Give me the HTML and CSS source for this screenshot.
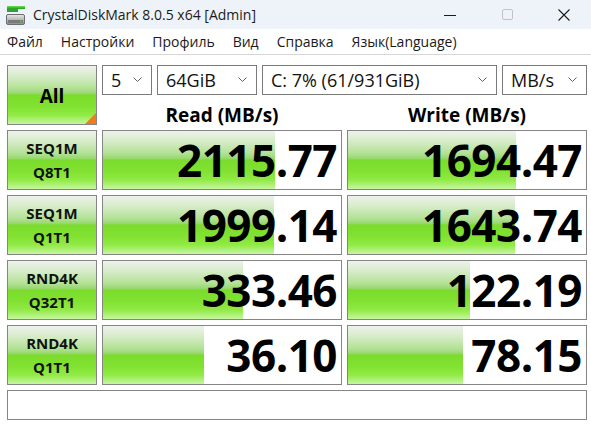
FILE: index.html
```html
<!DOCTYPE html>
<html lang="ru">
<head>
<meta charset="utf-8">
<title>CrystalDiskMark 8.0.5 x64 [Admin]</title>
<link rel="stylesheet" href="styles.css">
</head>
<body>
<div class="window">
  <div class="titlebar">
    <svg class="app-icon" width="20" height="20" viewBox="0 0 20 20">
      <defs>
        <linearGradient id="ig" x1="0" y1="0" x2="0" y2="1">
          <stop offset="0" stop-color="#6fe04a"/>
          <stop offset="1" stop-color="#1f9a2a"/>
        </linearGradient>
        <linearGradient id="dg" x1="0" y1="0" x2="0" y2="1">
          <stop offset="0" stop-color="#e8e8e8"/>
          <stop offset="1" stop-color="#8c8c8c"/>
        </linearGradient>
      </defs>
      <rect x="1" y="1" width="18" height="3" fill="url(#ig)"/>
      <rect x="1" y="4" width="11" height="3" fill="#2aa236"/>
      <rect x="0.5" y="9.5" width="18" height="10" rx="1.5" fill="url(#dg)" stroke="#6e6e6e"/>
      <rect x="2" y="15" width="15" height="3" fill="#7a7a7a"/>
      <rect x="14" y="15.5" width="2" height="2" fill="#40d040"/>
    </svg>
    <span class="title">CrystalDiskMark 8.0.5 x64 [Admin]</span>
    <div class="controls">
      <span class="ctrl ctrl-min"><svg width="12" height="12" viewBox="0 0 12 12"><line x1="0" y1="6.5" x2="12" y2="6.5" stroke="#1a1a1a" stroke-width="1"/></svg></span>
      <span class="ctrl ctrl-max"><svg width="12" height="12" viewBox="0 0 12 12"><rect x="0.5" y="0.5" width="10" height="10" rx="1.5" fill="none" stroke="#c2c2c2" stroke-width="1"/></svg></span>
      <span class="ctrl ctrl-close"><svg width="12" height="12" viewBox="0 0 12 12"><path d="M0.5 0.5 L11.5 11.5 M11.5 0.5 L0.5 11.5" stroke="#1a1a1a" stroke-width="1.1" fill="none"/></svg></span>
    </div>
  </div>
  <div class="menubar">
    <span class="menu-item">Файл</span>
    <span class="menu-item">Настройки</span>
    <span class="menu-item">Профиль</span>
    <span class="menu-item">Вид</span>
    <span class="menu-item">Справка</span>
    <span class="menu-item">Язык(Language)</span>
  </div>
  <div class="main">
    <div class="all-btn green">All</div>
    <div class="top-right">
      <div class="selects">
        <div class="select sel-count"><span>5</span><svg class="chev" width="9" height="5" viewBox="0 0 9 5"><path d="M0.5 0.5 L4.5 4.5 L8.5 0.5" fill="none" stroke="#606060"/></svg></div>
        <div class="select sel-size"><span>64GiB</span><svg class="chev" width="9" height="5" viewBox="0 0 9 5"><path d="M0.5 0.5 L4.5 4.5 L8.5 0.5" fill="none" stroke="#606060"/></svg></div>
        <div class="select sel-drive"><span>C: 7% (61/931GiB)</span><svg class="chev" width="9" height="5" viewBox="0 0 9 5"><path d="M0.5 0.5 L4.5 4.5 L8.5 0.5" fill="none" stroke="#606060"/></svg></div>
        <div class="select sel-unit"><span>MB/s</span><svg class="chev" width="9" height="5" viewBox="0 0 9 5"><path d="M0.5 0.5 L4.5 4.5 L8.5 0.5" fill="none" stroke="#606060"/></svg></div>
      </div>
      <div class="heads">
        <div class="head">Read (MB/s)</div>
        <div class="head">Write (MB/s)</div>
      </div>
    </div>

    <div class="label green"><span>SEQ1M</span><span>Q8T1</span></div>
    <div class="val" style="background-size: 172px 100%">2115.77</div>
    <div class="val" style="background-size: 168px 100%">1694.47</div>

    <div class="label green"><span>SEQ1M</span><span>Q1T1</span></div>
    <div class="val" style="background-size: 171px 100%">1999.14</div>
    <div class="val" style="background-size: 167px 100%">1643.74</div>

    <div class="label green"><span>RND4K</span><span>Q32T1</span></div>
    <div class="val" style="background-size: 140px 100%">333.46</div>
    <div class="val" style="background-size: 122px 100%">122.19</div>

    <div class="label green"><span>RND4K</span><span>Q1T1</span></div>
    <div class="val" style="background-size: 101px 100%">36.10</div>
    <div class="val" style="background-size: 115px 100%">78.15</div>

    <div class="comment"></div>
  </div>
</div>
</body>
</html>
```
FILE: styles.css
```css
* { box-sizing: border-box; }

html, body {
  margin: 0;
  padding: 0;
  background: #ffffff;
}

body {
  width: 591px;
  height: 424px;
  overflow: hidden;
  font-family: "Open Sans", "Noto Sans", sans-serif;
  color: #000;
}

.window {
  width: 591px;
  height: 424px;
  display: flex;
  flex-direction: column;
}

.titlebar {
  height: 29px;
  background: #eef3f9;
  display: flex;
  align-items: center;
  flex-shrink: 0;
}

.app-icon {
  margin-left: 6px;
  flex-shrink: 0;
}

.title {
  margin-left: 7px;
  font-size: 14px;
  color: #1b1b1b;
  white-space: nowrap;
}

.controls {
  margin-left: auto;
  display: flex;
  height: 29px;
}

.ctrl {
  width: 58px;
  height: 29px;
  display: flex;
  align-items: center;
  justify-content: center;
}

.ctrl-close {
  width: 54px;
}

.menubar {
  height: 26px;
  background: #ffffff;
  border-bottom: 1px solid #d6d6d6;
  display: flex;
  align-items: center;
  padding-left: 7px;
  gap: 18px;
  flex-shrink: 0;
  font-size: 14px;
  color: #1a1a1a;
}

.menu-item {
  white-space: nowrap;
}

.main {
  padding: 10px 0 0 7px;
  display: grid;
  grid-template-columns: 90px 240px 240px;
  grid-template-rows: 60px 60px 60px 60px 60px 30px;
  gap: 5px;
}

.green {
  background: linear-gradient(to bottom,
    #eef2ec 0%,
    #d6ecc8 18%,
    #b4e296 38%,
    #9ad872 47%,
    #7adc2c 50%,
    #82e232 70%,
    #90ea44 84%,
    #c6f6a0 100%);
}

.all-btn {
  position: relative;
  border: 1px solid #858585;
  display: flex;
  align-items: center;
  justify-content: center;
  font-size: 19px;
  font-weight: 700;
  padding-top: 2px;
}

.all-btn::after {
  content: "";
  position: absolute;
  right: 0;
  bottom: 0;
  width: 0;
  height: 0;
  border-left: 11px solid transparent;
  border-bottom: 11px solid #f47a1c;
}

.top-right {
  grid-column: 2 / 4;
  display: flex;
  flex-direction: column;
}

.selects {
  display: flex;
  gap: 5px;
  height: 30px;
}

.select {
  border: 1px solid #7a7a7a;
  background: #fff;
  display: flex;
  align-items: center;
  justify-content: space-between;
  padding: 0 9px 0 8px;
  font-size: 18px;
  color: #111;
  white-space: nowrap;
}

.sel-count { width: 50px; }
.sel-size { width: 100px; }
.sel-drive { width: 235px; }
.sel-unit { width: 85px; }

.chev {
  flex-shrink: 0;
  margin-bottom: 2px;
}

.heads {
  display: grid;
  grid-template-columns: 240px 240px;
  gap: 5px;
  height: 30px;
}

.head {
  text-align: center;
  font-size: 19px;
  font-weight: 700;
  line-height: 30px;
  padding-top: 5px;
}

.label {
  border: 1px solid #858585;
  display: flex;
  flex-direction: column;
  align-items: center;
  justify-content: center;
  font-size: 15px;
  font-weight: 700;
  line-height: 24px;
  color: #111;
}

.val {
  border: 1px solid #858585;
  background-color: #fff;
  background-image: linear-gradient(to bottom,
    #eef2ec 0%,
    #d6ecc8 18%,
    #b4e296 38%,
    #9ad872 47%,
    #7adc2c 50%,
    #82e232 70%,
    #90ea44 84%,
    #c6f6a0 100%);
  background-repeat: no-repeat;
  text-align: right;
  font-size: 44px;
  font-weight: 700;
  line-height: 58px;
  padding-right: 4px;
  letter-spacing: -0.5px;
}

.comment {
  grid-column: 1 / -1;
  border: 1px solid #858585;
}
```
